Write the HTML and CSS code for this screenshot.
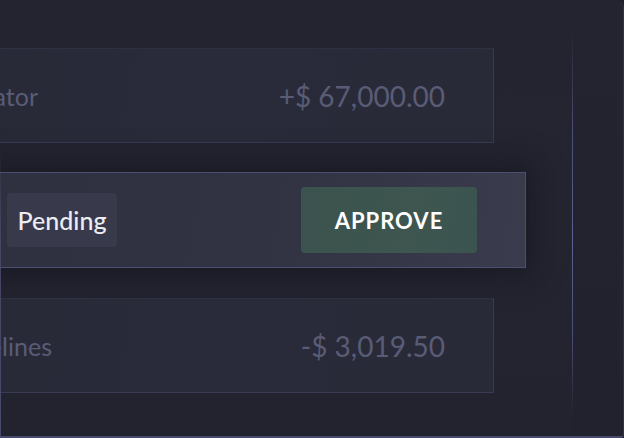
FILE: index.html
```html
<!DOCTYPE html>
<html>
<head>
<meta charset="utf-8">
<link rel="stylesheet" href="styles.css">
</head>
<body>
<div class="frame">
  <div class="main">
    <div class="row row-faded">
      <span class="label label-first">Collaborator</span>
      <span class="amount">+$ 67,000.00</span>
    </div>
    <div class="row row-active">
      <span class="name">Payout</span>
      <span class="pill">Pending</span>
      <button class="approve">APPROVE</button>
    </div>
    <div class="row row-faded">
      <span class="label label-last">Guidelines</span>
      <span class="amount">-$ 3,019.50</span>
    </div>
  </div>
  <div class="side"></div>
</div>
</body>
</html>
```

FILE: styles.css
```css
* { box-sizing: border-box; }
html, body { margin: 0; padding: 0; background: #1d1e27; }
body { font-family: Lato, "Open Sans", sans-serif; }

.frame {
  position: relative;
  width: 624px;
  height: 438px;
  display: grid;
  grid-template-columns: 572px 1fr;
  background: linear-gradient(180deg, #232430 0%, #252532 50%, #22232f 100%);
  border-right: 1px solid #30324a;
  border-bottom: 2px solid #474a6a;
  border-radius: 0 8px 4px 0;
  overflow: hidden;
}
.frame::before {
  content: "";
  position: absolute;
  left: 0; top: 150px; bottom: 0;
  width: 1px;
  background: linear-gradient(180deg, rgba(74,77,110,0) 0%, rgba(74,77,110,0.8) 30%, #474a6a 100%);
}

.main {
  display: flex;
  flex-direction: column;
  padding-top: 48px;
  gap: 29px;
  overflow: hidden;
}

.row {
  height: 95px;
  display: flex;
  align-items: center;
  flex-shrink: 0;
}

.row-faded {
  margin-left: -260px;
  margin-right: 78px;
  padding-right: 48px;
  justify-content: space-between;
  background: linear-gradient(100deg, #272835 0%, #2a2b3a 60%, #292a38 100%);
  border: 1px solid #2e3043;
  border-right-color: #393b56;
  border-bottom-color: #393b56;
}
.row-faded + .row-active + .row-faded { margin-top: 1px; }

.label, .amount {
  font-size: 28px;
  color: #5a5c76;
  white-space: nowrap;
}
.label { text-align: right; font-size: 25px; }
.label-first { width: 297px; }
.label-last { width: 311px; }

.row-active {
  height: 96px;
  margin-left: -120px;
  margin-right: 46px;
  padding-right: 48px;
  background: linear-gradient(100deg, #2e303f 0%, #313343 60%, #3a3c4d 100%);
  border: 1px solid #4b4e70;
  box-shadow: 0 0 30px 8px rgba(14, 14, 20, 0.45);
}
.name {
  width: 126px;
  font-size: 22px;
  color: #8a8ca3;
  visibility: hidden;
}
.pill {
  height: 54px;
  width: 110px;
  display: flex;
  align-items: center;
  justify-content: center;
  background: #383a4c;
  border-radius: 4px;
  color: #ececf2;
  font-size: 25px;
  font-weight: 500;
}
.approve {
  margin-left: auto;
  width: 176px;
  height: 66px;
  border: none;
  border-radius: 4px;
  background: linear-gradient(100deg, #3b524e 0%, #3e564f 60%, #3c5450 100%);
  color: #ffffff;
  font-family: inherit;
  font-size: 22px;
  font-weight: 700;
  letter-spacing: 1px;
}

.side {
  position: relative;
  background: linear-gradient(180deg, #232430 0%, #21222d 100%);
}
.side::before {
  content: "";
  position: absolute;
  left: 0; top: 30px; bottom: 20px;
  width: 1px;
  background: linear-gradient(180deg, rgba(80,83,120,0) 0%, #4a4d72 25%, #5d6190 55%, #4a4d72 80%, rgba(80,83,120,0) 100%);
}
```
